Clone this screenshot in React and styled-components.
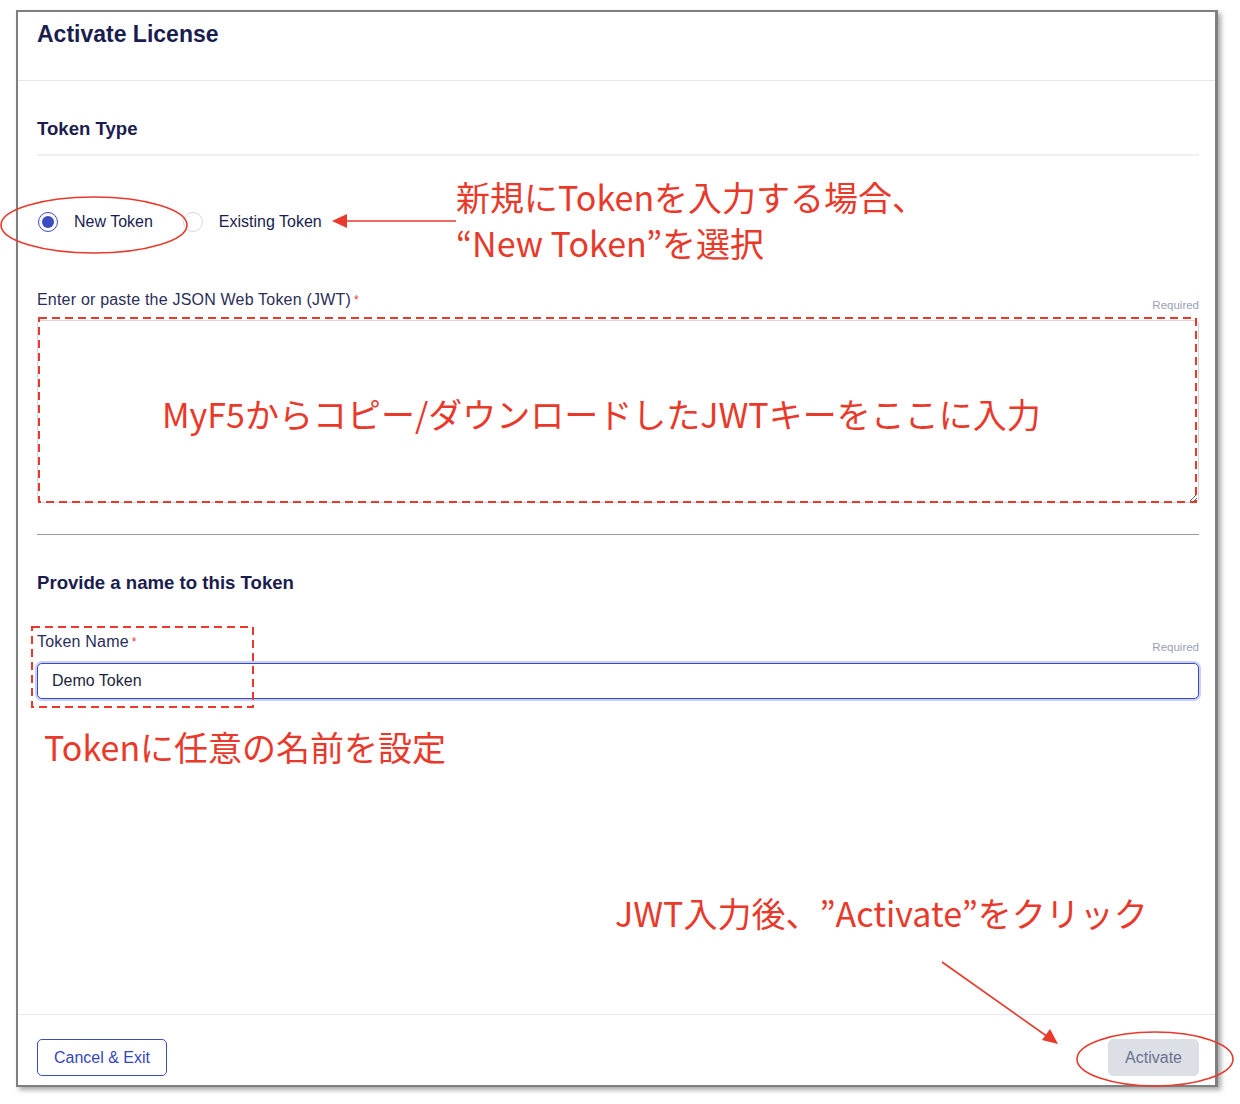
import React from 'react'
import styled, { createGlobalStyle } from 'styled-components'

const GlobalStyle = createGlobalStyle`
  html, body {
    margin: 0;
    padding: 0;
    background: #fff;
  }
  body {
    font-family: "Liberation Sans", Arial, sans-serif;
  }
`

const RED = '#e8392b'
const NAVY = '#1a1d4e'
const BLUE = '#3a4cc0'

const Page = styled.div`
  position: relative;
  width: 1240px;
  height: 1104px;
  box-sizing: border-box;
  padding: 10px 0 0 16px;
  overflow: hidden;
`

const Panel = styled.div`
  width: 1202px;
  height: 1077px;
  box-sizing: border-box;
  border: 2px solid #7f7f7f;
  border-right-width: 3px;
  box-shadow: 3px 3px 5px rgba(0, 0, 0, 0.35);
  background: #fff;
  display: flex;
  flex-direction: column;
`

const Header = styled.div`
  height: 69px;
  box-sizing: border-box;
  padding: 8px 17px 0 19px;
  border-bottom: 1px solid #e4e7f0;
  flex: none;
`

const Title = styled.h1`
  margin: 0;
  font-size: 23px;
  line-height: 28px;
  font-weight: 700;
  color: ${NAVY};
`

const Body = styled.div`
  flex: 1;
  padding: 0 16px 0 19px;
  display: flex;
  flex-direction: column;
`

const SectionTitle = styled.h2`
  margin: ${p => p.$top}px 0 0;
  font-size: 18.6px;
  line-height: 24px;
  font-weight: 700;
  color: ${NAVY};
`

const Rule = styled.div`
  margin-top: ${p => p.$top}px;
  height: ${p => (p.$strong ? 1 : 2)}px;
  background: ${p => (p.$strong ? '#9a9a9a' : '#eef0f5')};
`

const RadioRow = styled.div`
  margin-top: 54px;
  height: 24px;
  display: flex;
  align-items: center;
  padding-left: 1px;
`

const RadioItem = styled.label`
  display: flex;
  align-items: center;
  gap: 16px;
  margin-right: 30px;
  font-size: 16px;
  color: ${NAVY};
`

const RadioDot = styled.span`
  width: 20px;
  height: 20px;
  box-sizing: border-box;
  border-radius: 50%;
  border: 1.5px solid ${p => (p.$on ? BLUE : '#d4d7e2')};
  display: flex;
  align-items: center;
  justify-content: center;
  &::after {
    content: '';
    width: 12px;
    height: 12px;
    border-radius: 50%;
    background: ${p => (p.$on ? BLUE : 'transparent')};
  }
`

const FieldHead = styled.div`
  margin-top: ${p => p.$top}px;
  display: flex;
  justify-content: space-between;
  align-items: flex-end;
  line-height: 20px;
`

const Label = styled.span`
  font-size: 16px;
  letter-spacing: 0.2px;
  color: #2a2e58;
  &::after {
    content: '*';
    color: ${RED};
    font-size: 12px;
    margin-left: 3px;
    vertical-align: top;
  }
`

const Hint = styled.span`
  font-size: 11.5px;
  line-height: 16px;
  margin-bottom: -3px;
  color: #9aa0b6;
`

const TextArea = styled.textarea`
  margin-top: 10px;
  height: 183px;
  box-sizing: border-box;
  border: 1px solid #d3d6df;
  border-radius: 4px;
  resize: vertical;
  font: inherit;
  padding: 8px 14px;
  outline: none;
`

const Input = styled.input`
  margin-top: 11px;
  height: 36px;
  box-sizing: border-box;
  border: 1.5px solid ${BLUE};
  border-radius: 5px;
  box-shadow: 0 0 0 2px #cad0f2;
  padding: 0 14px;
  font-family: inherit;
  font-size: 16px;
  color: #1c1f3c;
  outline: none;
`

const Footer = styled.div`
  flex: none;
  height: 71px;
  box-sizing: border-box;
  border-top: 1px solid #e8eaf1;
  padding: 24px 16px 0 19px;
  display: flex;
  justify-content: space-between;
  align-items: flex-start;
`

const Button = styled.button`
  height: 37px;
  box-sizing: border-box;
  border-radius: 5px;
  font-family: inherit;
  font-size: 16px;
  padding: 0 16px;
  border: 1px solid ${p => (p.$primary ? '#dddfe7' : BLUE)};
  background: ${p => (p.$primary ? '#dddfe7' : '#fff')};
  color: ${p => (p.$primary ? '#6b7090' : '#3546b8')};
`

const Note = styled.div`
  position: absolute;
  left: ${p => p.$x}px;
  top: ${p => p.$y}px;
  font-family: "Noto Sans CJK JP", "Noto Sans", sans-serif;
  font-size: 34px;
  line-height: ${p => p.$lh || 40}px;
  color: ${RED};
  white-space: nowrap;
  text-spacing-trim: space-all;
`

const Overlay = styled.svg`
  position: absolute;
  left: 0;
  top: 0;
  pointer-events: none;
`

function Marks() {
  return (
    <Overlay width="1240" height="1104" viewBox="0 0 1240 1104">
      <g fill="none" stroke={RED}>
        <ellipse cx="94" cy="225" rx="93" ry="28" strokeWidth="1.6" />
        <ellipse cx="1155" cy="1059" rx="78" ry="27" strokeWidth="1.6" />
        <rect x="39" y="318" width="1157" height="184" strokeWidth="2" strokeDasharray="8 5" />
        <rect x="32" y="627" width="221" height="80" strokeWidth="2" strokeDasharray="8 5" />
        <line x1="456" y1="221" x2="344" y2="221" strokeWidth="1.6" />
        <line x1="942" y1="962" x2="1048" y2="1037" strokeWidth="1.6" />
      </g>
      <g fill={RED}>
        <polygon points="332,221 347,214 347,228" />
        <polygon points="1058,1044 1042,1040 1050,1029" />
      </g>
    </Overlay>
  )
}

export default function App() {
  return (
    <>
      <GlobalStyle />
      <Page>
        <Panel>
          <Header>
            <Title>Activate License</Title>
          </Header>
          <Body>
            <SectionTitle $top={36}>Token Type</SectionTitle>
            <Rule $top={13} />
            <RadioRow>
              <RadioItem>
                <RadioDot $on />
                New Token
              </RadioItem>
              <RadioItem>
                <RadioDot />
                Existing Token
              </RadioItem>
            </RadioRow>
            <FieldHead $top={56}>
              <Label>Enter or paste the JSON Web Token (JWT)</Label>
              <Hint>Required</Hint>
            </FieldHead>
            <TextArea />
            <Rule $top={31} $strong />
            <SectionTitle $top={36}>Provide a name to this Token</SectionTitle>
            <FieldHead $top={37}>
              <Label>Token Name</Label>
              <Hint>Required</Hint>
            </FieldHead>
            <Input defaultValue="Demo Token" />
          </Body>
          <Footer>
            <Button>Cancel &amp; Exit</Button>
            <Button $primary>Activate</Button>
          </Footer>
        </Panel>
        <Marks />
        <Note $x={456} $y={174} $lh={46}>
          新規にTokenを入力する場合、
          <br />
          “New Token”を選択
        </Note>
        <Note $x={162} $y={394}>
          MyF5からコピー/ダウンロードしたJWTキーをここに入力
        </Note>
        <Note $x={44} $y={727}>Tokenに任意の名前を設定</Note>
        <Note $x={615} $y={893}>JWT入力後、”Activate”をクリック</Note>
      </Page>
    </>
  )
}
